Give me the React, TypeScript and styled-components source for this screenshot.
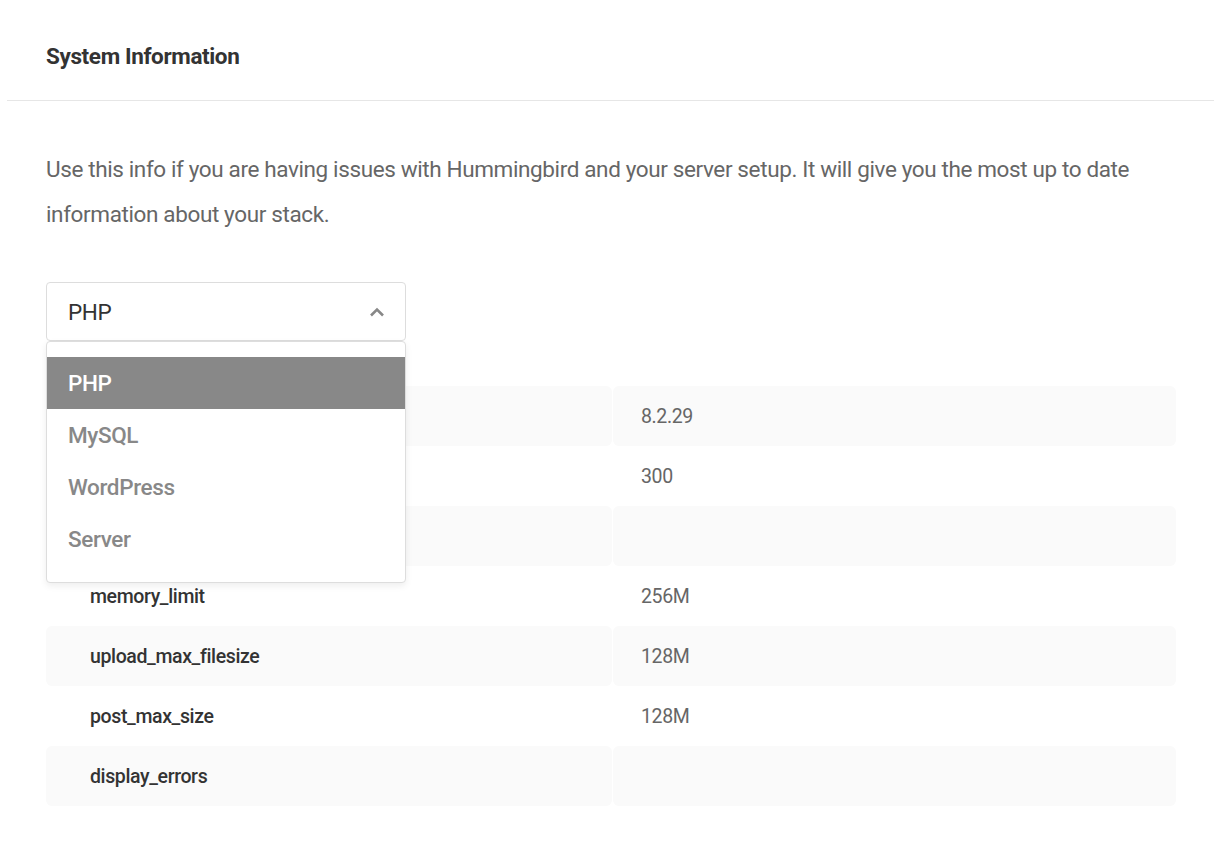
import React, { useState } from 'react';
import styled, { createGlobalStyle } from 'styled-components';

const GlobalStyle = createGlobalStyle`
  html, body {
    margin: 0;
    padding: 0;
    background: #fff;
    font-family: Roboto, "Liberation Sans", Arial, sans-serif;
    -webkit-font-smoothing: antialiased;
  }
`;

const Page = styled.div`
  padding: 0 6px;
`;

const Box = styled.section`
  background: #fff;
`;

const BoxHeader = styled.header`
  height: 101px;
  display: flex;
  align-items: center;
  padding: 11px 40px 0;
  border-bottom: 1px solid #e6e6e6;
  box-sizing: border-box;
  margin: 0 0 0 1px;
`;

const Title = styled.h2`
  margin: 0 0 0 -1px;
  font-size: 22.5px;
  font-weight: 700;
  color: #333;
  letter-spacing: -0.375px;
`;

const BoxBody = styled.div`
  padding: 46px 38px 40px 40px;
`;

const Intro = styled.p`
  margin: 0 0 45px;
  font-size: 22.5px;
  line-height: 45px;
  letter-spacing: -0.375px;
  color: #666;
  max-width: 1100px;
`;

const SelectWrap = styled.div`
  position: relative;
  width: 360px;
  margin-bottom: 45px;
`;

const SelectButton = styled.button`
  width: 100%;
  height: 59px;
  display: flex;
  align-items: center;
  justify-content: space-between;
  padding: 0 20px 0 21px;
  background: #fff;
  border: 1px solid #ddd;
  border-radius: 4px;
  font-family: inherit;
  font-size: 22.5px;
  letter-spacing: -0.375px;
  color: #333;
  cursor: pointer;
  box-sizing: border-box;
`;

const Menu = styled.ul`
  position: absolute;
  top: 59px;
  left: 0;
  right: 0;
  margin: 0;
  padding: 15px 0 17px;
  list-style: none;
  background: #fff;
  border: 1px solid #ddd;
  border-radius: 4px;
  box-shadow: 0 3px 7px rgba(0, 0, 0, 0.07);
  z-index: 5;
`;

const MenuItem = styled.li<{ $active?: boolean }>`
  height: 52px;
  display: flex;
  align-items: center;
  padding: 0 21px;
  font-size: 22.5px;
  letter-spacing: -0.375px;
  font-weight: 500;
  color: ${({ $active }) => ($active ? '#fff' : '#888')};
  background: ${({ $active }) => ($active ? '#888' : 'transparent')};
  cursor: pointer;
`;

const Table = styled.div`
  display: flex;
  flex-direction: column;
`;

const Row = styled.div<{ $shaded?: boolean }>`
  display: grid;
  grid-template-columns: 566px 1fr;
  column-gap: 1px;
  height: 60px;

  & > div {
    background: ${({ $shaded }) => ($shaded ? '#fafafa' : '#fff')};
  }
`;

const NameCell = styled.div`
  display: flex;
  align-items: center;
  padding-left: 44px;
  border-radius: 6px;
  font-size: 19.5px;
  letter-spacing: -0.375px;
  font-weight: 500;
  color: #333;
`;

const ValueCell = styled.div`
  display: flex;
  align-items: center;
  padding-left: 28px;
  border-radius: 6px;
  font-size: 19.5px;
  letter-spacing: -0.375px;
  color: #666;
`;

const Chevron = () => (
  <svg width="16" height="10" viewBox="0 0 16 10">
    <polyline points="2,8.5 8,2.5 14,8.5" fill="none" stroke="#888" strokeWidth="2.6" />
  </svg>
);

const options = ['PHP', 'MySQL', 'WordPress', 'Server'];

const rows: [string, string][] = [
  ['Version', '8.2.29'],
  ['max_execution_time', '300'],
  ['allow_url_fopen', ''],
  ['memory_limit', '256M'],
  ['upload_max_filesize', '128M'],
  ['post_max_size', '128M'],
  ['display_errors', ''],
];

const App: React.FC = () => {
  const [selected, setSelected] = useState('PHP');
  const [open, setOpen] = useState(true);

  return (
    <Page>
      <GlobalStyle />
      <Box>
        <BoxHeader>
          <Title>System Information</Title>
        </BoxHeader>
        <BoxBody>
          <Intro>
            Use this info if you are having issues with Hummingbird and your server setup. It will give you the most up
            to date information about your stack.
          </Intro>
          <SelectWrap>
            <SelectButton onClick={() => setOpen(!open)}>
              {selected}
              <Chevron />
            </SelectButton>
            {open && (
              <Menu>
                {options.map((o) => (
                  <MenuItem
                    key={o}
                    $active={o === selected}
                    onClick={() => {
                      setSelected(o);
                      setOpen(false);
                    }}
                  >
                    {o}
                  </MenuItem>
                ))}
              </Menu>
            )}
          </SelectWrap>
          <Table>
            {rows.map(([name, value], i) => (
              <Row key={name} $shaded={i % 2 === 0}>
                <NameCell>{name}</NameCell>
                <ValueCell>{value}</ValueCell>
              </Row>
            ))}
          </Table>
        </BoxBody>
      </Box>
    </Page>
  );
};

export default App;
